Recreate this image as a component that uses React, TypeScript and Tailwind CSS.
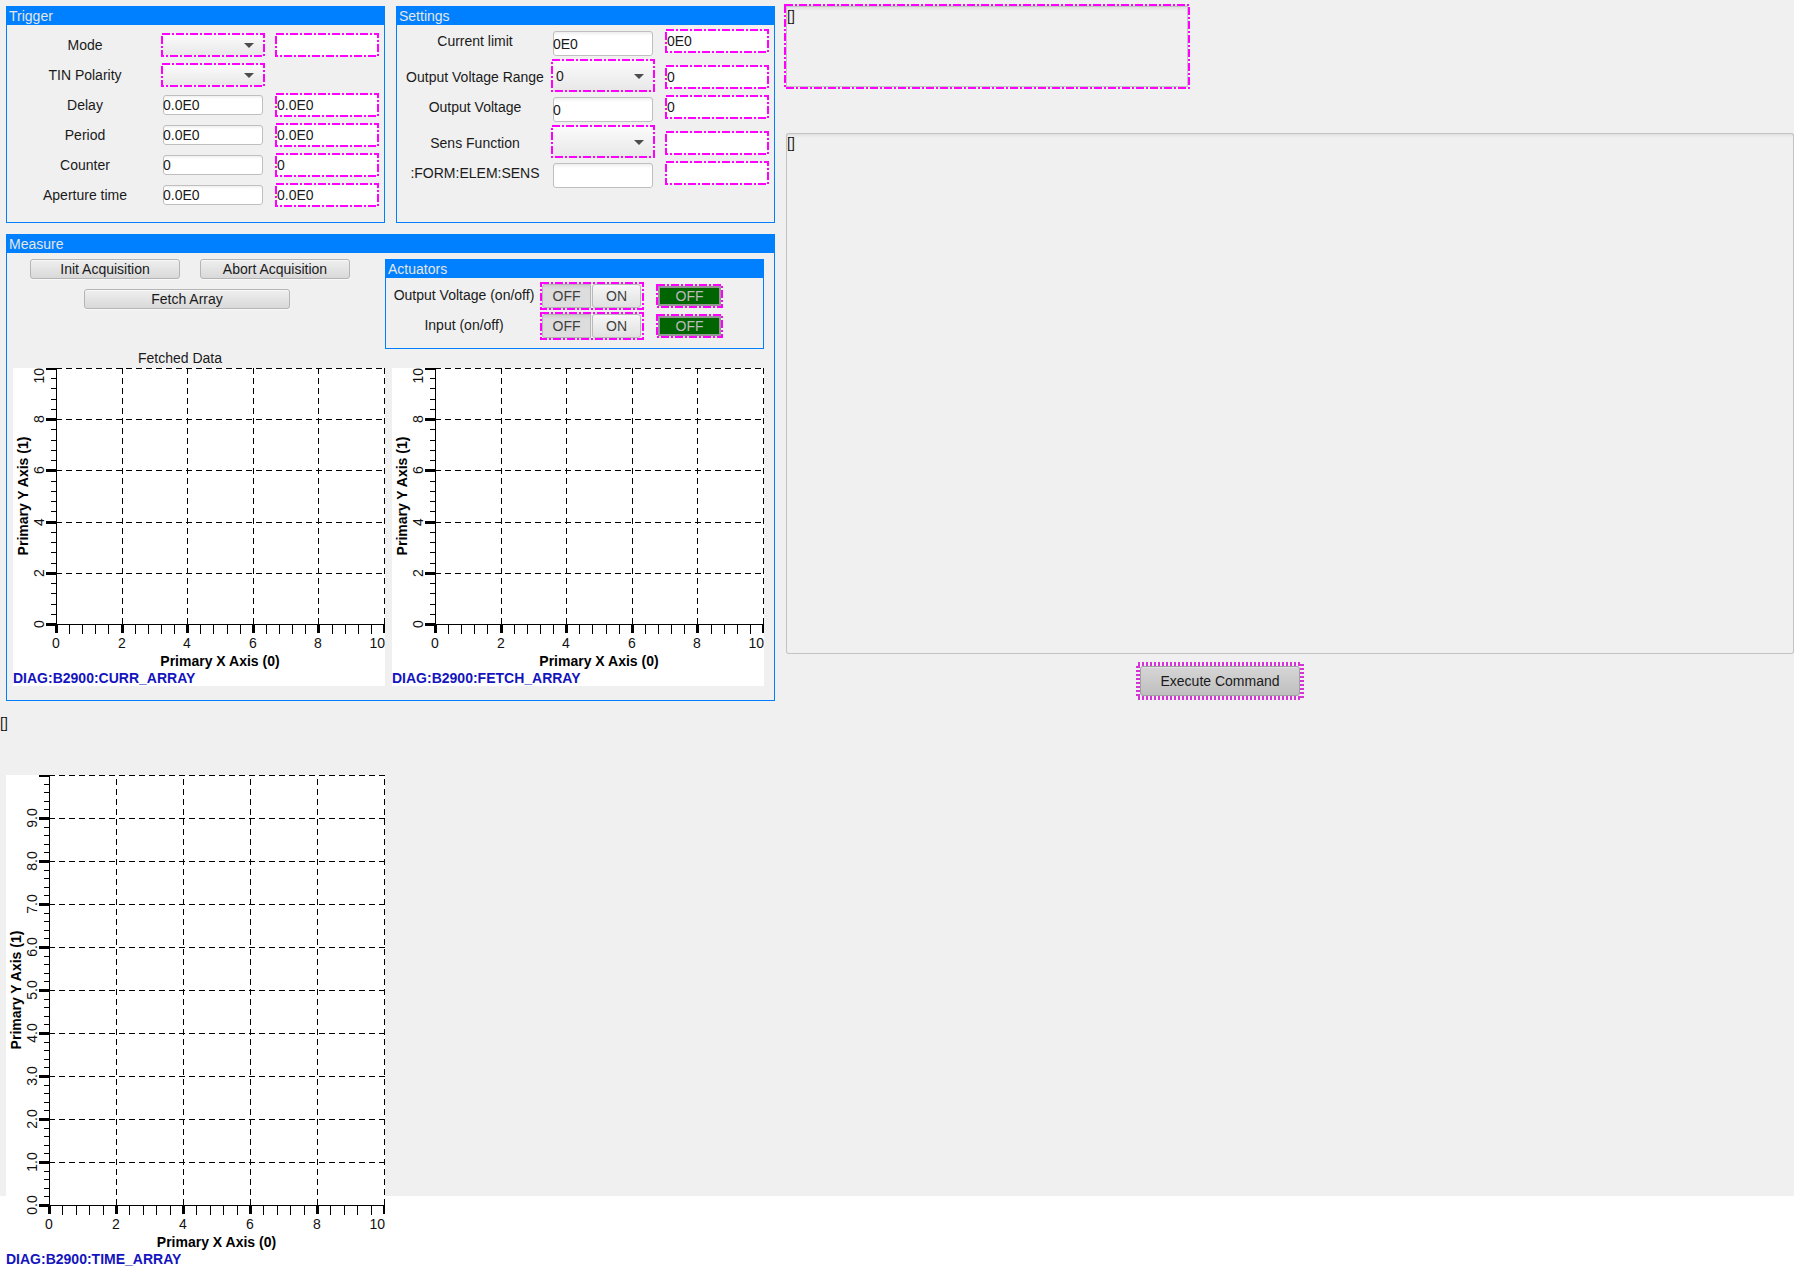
import React, { useId } from "react";

const ALARM = "#ff00ff";

function AlarmBorder() {
  return (
    <svg
      aria-hidden="true"
      className="pointer-events-none absolute inset-px h-[calc(100%-2px)] w-[calc(100%-2px)] overflow-visible"
    >
      <rect
        width="100%"
        height="100%"
        fill="none"
        stroke={ALARM}
        strokeWidth="2"
        strokeDasharray="8 2 2 2"
        shapeRendering="crispEdges"
      />
    </svg>
  );
}

function Panel({
  title,
  className = "",
  children,
}: {
  title: string;
  className?: string;
  children: React.ReactNode;
}) {
  return (
    <section className={`border border-[#0080ff] ${className}`}>
      <h2 className="h-[18px] bg-[#0080ff] px-0.5 text-[#e6e6e6]">{title}</h2>
      {children}
    </section>
  );
}

function TextEntry({ id, value, tall }: { id: string; value: string; tall?: boolean }) {
  return (
    <input
      id={id}
      defaultValue={value}
      className={`block w-[100px] rounded-[3px] bg-white bg-linear-to-b from-[#eaeaea] to-white to-20% p-0 shadow-[inset_0_0_0_1px_#bfbfbf] outline-none ${
        tall ? "h-[25px]" : "h-5"
      }`}
    />
  );
}

function Combo({ id, options, tall }: { id: string; options: string[]; tall?: boolean }) {
  return (
    <div className={`relative w-[104px] p-0.5 ${tall ? "h-[33px]" : "h-6"}`}>
      <select
        id={id}
        className="block h-full w-full appearance-none bg-linear-to-b from-[#fbfbfb] to-[#e8e8e8] px-[3px] outline-none"
      >
        {options.map((o) => (
          <option key={o}>{o}</option>
        ))}
      </select>
      <svg
        aria-hidden="true"
        viewBox="0 0 10 5"
        className="pointer-events-none absolute top-1/2 right-[11px] -mt-0.5 h-[5px] w-2.5"
      >
        <path d="M0 0h10L5 5z" fill="#4d4d4d" />
      </svg>
      <AlarmBorder />
    </div>
  );
}

function Readback({ label, value }: { label: string; value: string }) {
  return (
    <output
      aria-label={`${label} readback`}
      className="relative block h-6 w-[104px] bg-white bg-clip-content p-0.5 leading-5"
    >
      {value}
      <AlarmBorder />
    </output>
  );
}

type Field = { label: string; value: string; kind: "text" | "combo"; readback: boolean };

const triggerFields: Field[] = [
  { label: "Mode", value: "", kind: "combo", readback: true },
  { label: "TIN Polarity", value: "", kind: "combo", readback: false },
  { label: "Delay", value: "0.0E0", kind: "text", readback: true },
  { label: "Period", value: "0.0E0", kind: "text", readback: true },
  { label: "Counter", value: "0", kind: "text", readback: true },
  { label: "Aperture time", value: "0.0E0", kind: "text", readback: true },
];

const settingsFields: Field[] = [
  { label: "Current limit", value: "0E0", kind: "text", readback: true },
  { label: "Output Voltage Range", value: "0", kind: "combo", readback: true },
  { label: "Output Voltage", value: "0", kind: "text", readback: true },
  { label: "Sens Function", value: "", kind: "combo", readback: true },
  { label: ":FORM:ELEM:SENS", value: "", kind: "text", readback: true },
];

function TriggerRow({ label, value, kind, readback }: Field) {
  const id = useId();
  return (
    <div className="flex h-6 items-center">
      <label htmlFor={id} className="w-[150px] pr-0.5 text-center">
        {label}
      </label>
      <div className="flex w-[104px] justify-center">
        {kind === "combo" ? <Combo id={id} options={[value]} /> : <TextEntry id={id} value={value} />}
      </div>
      <div className="ml-2.5">{readback && <Readback label={label} value={value} />}</div>
    </div>
  );
}

function SettingsRow({ label, value, kind }: Field) {
  const id = useId();
  const combo = kind === "combo";
  return (
    <div className={`flex items-start ${combo ? "h-9" : "h-[30px]"}`}>
      <label htmlFor={id} className={`w-[150px] pr-0.5 text-center leading-6 ${combo ? "mt-1.5" : ""}`}>
        {label}
      </label>
      <div className={`flex w-[104px] justify-center ${combo ? "" : "pt-0.5"}`}>
        {combo ? <Combo id={id} options={[value]} tall /> : <TextEntry id={id} value={value} tall />}
      </div>
      <div className={`ml-2.5 ${combo ? "mt-1.5" : ""}`}>
        <Readback label={label} value={value} />
      </div>
    </div>
  );
}

function ActionButton({ children, className }: { children: React.ReactNode; className: string }) {
  return (
    <button
      type="button"
      className={`h-5 shrink-0 rounded-[3px] border border-[#b5b5b5] bg-linear-to-b from-[#efefef] to-[#d9d9d9] leading-[18px] shadow-[inset_0_1px_0_#f8f8f8,0_1px_0_#f8f8f8] ${className}`}
    >
      {children}
    </button>
  );
}

function ActuatorRow({ label }: { label: string }) {
  return (
    <div className="flex h-[30px] items-start">
      <div className="w-[154px] pt-px pl-0.5 text-center leading-6">{label}</div>
      <div role="group" aria-label={label} className="relative flex h-7 w-[104px] p-0.5 text-[#404040]">
        <button
          type="button"
          aria-pressed="true"
          className="w-[49px] rounded-l-[3px] border border-[#b5b5b5] bg-linear-to-b from-[#cfcfcf] via-[#dddddd] via-20% to-[#dddddd]"
        >
          OFF
        </button>
        <button
          type="button"
          aria-pressed="false"
          className="ml-px w-[49px] rounded-[3px] border border-[#b9b9b9] bg-linear-to-b from-[#f7f7f7] to-[#e0e0e0]"
        >
          ON
        </button>
        <AlarmBorder />
      </div>
      <div className="relative mt-0.5 ml-3 h-6 w-[67px] p-0.5">
        <output
          aria-label={`${label} state`}
          className="block h-5 border-2 border-[#969696] bg-[#006400] text-center leading-4 text-[#bcbcbc]"
        >
          OFF
        </output>
        <AlarmBorder />
      </div>
    </div>
  );
}

type ChartProps = {
  width: number;
  axisX: number;
  plotHeight: number;
  yLabels: string[];
  trace: string;
};

function Chart({ width, axisX, plotHeight, yLabels, trace }: ChartProps) {
  const right = width - 1;
  const plotWidth = right - axisX;
  const yMajors = yLabels.length - 1;
  const xAt = (f: number) => Math.round(axisX + f * plotWidth);
  const yAt = (f: number) => Math.round((1 - f) * plotHeight);
  const xTicks = Array.from({ length: 26 }, (_, i) => i);
  const yTicks = Array.from({ length: yMajors * 5 + 1 }, (_, i) => i);
  return (
    <figure className="bg-white">
      <svg
        width={width}
        height={plotHeight + 46}
        className="block overflow-hidden text-[14px]"
        role="img"
        aria-label={`${trace} plot`}
      >
        <g stroke="#000" strokeDasharray="6 4" shapeRendering="crispEdges">
          {xTicks
            .filter((i) => i % 5 === 0 && i > 0)
            .map((i) => (
              <line key={i} x1={xAt(i / 25) + 0.5} x2={xAt(i / 25) + 0.5} y1={plotHeight} y2={0} />
            ))}
          {yTicks
            .filter((i) => i % 5 === 0 && i > 0)
            .map((i) => {
              const y = yAt(i / (yMajors * 5)) + 0.5;
              return <line key={i} x1={axisX} x2={width} y1={y} y2={y} />;
            })}
        </g>
        <g fill="#000" shapeRendering="crispEdges">
          <rect x={axisX} y="0" width="1" height={plotHeight + 1} />
          <rect x={axisX} y={plotHeight} width={plotWidth + 1} height="1" />
          {xTicks.map((i) =>
            i % 5 === 0 ? (
              <rect key={i} x={xAt(i / 25) - 1} y={plotHeight} width="3" height="9" />
            ) : (
              <rect key={i} x={xAt(i / 25)} y={plotHeight} width="1" height="10" />
            ),
          )}
          {yTicks.map((i) => {
            const y = yAt(i / (yMajors * 5));
            return i % 5 === 0 ? (
              <rect key={i} x={axisX - 10} y={y - 1} width="10" height="3" />
            ) : (
              <rect key={i} x={axisX - 5} y={y} width="5" height="1" />
            );
          })}
        </g>
        <g fill="#111">
          {[0, 2, 4, 6, 8, 10].map((v) => (
            <text
              key={v}
              x={v === 10 ? width : xAt(v / 10)}
              y={plotHeight + 24}
              textAnchor={v === 10 ? "end" : "middle"}
            >
              {v}
            </text>
          ))}
          {yLabels.map((l, i) => {
            const top = i === yMajors;
            return (
              <text
                key={i}
                transform={`translate(${axisX - 12} ${top ? 0 : yAt(i / yMajors)}) rotate(-90)`}
                textAnchor={top ? "end" : "middle"}
              >
                {l}
              </text>
            );
          })}
        </g>
        <g fill="#000" fontWeight="bold" textAnchor="middle">
          <text x={axisX + plotWidth / 2} y={plotHeight + 42}>
            Primary X Axis (0)
          </text>
          <text transform={`translate(${axisX - 28} ${plotHeight / 2}) rotate(-90)`}>Primary Y Axis (1)</text>
        </g>
      </svg>
      <figcaption className="h-4 leading-4 font-bold text-[#1414be]">{trace}</figcaption>
    </figure>
  );
}

const evenLabels = ["0", "2", "4", "6", "8", "10"];
const decimalLabels = ["0.0", "1.0", "2.0", "3.0", "4.0", "5.0", "6.0", "7.0", "8.0", "9.0", ""];

export default function App() {
  return (
    <div className="bg-[linear-gradient(#f0f0f0,#f0f0f0)] bg-[length:100%_1196px] bg-no-repeat font-['Liberation_Sans',Arial,sans-serif] text-[14px] leading-[18px] text-[#1a1a1a]">
      <main className="flex items-start">
        <div className="w-[785px] shrink-0 pt-1.5">
          <div className="ml-1.5 w-[769px]">
            <div className="flex justify-between">
              <Panel title="Trigger" className="h-[217px] w-[379px]">
                <div className="mt-2 ml-1 flex flex-col gap-1.5">
                  {triggerFields.map((f) => (
                    <TriggerRow key={f.label} {...f} />
                  ))}
                </div>
              </Panel>
              <Panel title="Settings" className="h-[217px] w-[379px]">
                <div className="mt-1 ml-1">
                  {settingsFields.map((f) => (
                    <SettingsRow key={f.label} {...f} />
                  ))}
                </div>
              </Panel>
            </div>

            <Panel title="Measure" className="mt-[11px] pb-3.5">
              <div className="mr-2.5 ml-1.5 flex justify-between pt-1.5">
                <div className="w-[334px]">
                  <div className="ml-[17px] flex gap-5">
                    <ActionButton className="w-[150px]">Init Acquisition</ActionButton>
                    <ActionButton className="w-[150px]">Abort Acquisition</ActionButton>
                  </div>
                  <ActionButton className="mt-2.5 ml-[71px] block w-[206px]">Fetch Array</ActionButton>
                  <div className="mt-10 h-[19px] text-center">Fetched Data</div>
                </div>
                <Panel title="Actuators" className="h-[90px] w-[379px]">
                  <div className="mt-1">
                    <ActuatorRow label="Output Voltage (on/off)" />
                    <ActuatorRow label="Input (on/off)" />
                  </div>
                </Panel>
              </div>
              <div className="mr-2.5 ml-1.5 flex justify-between">
                <Chart width={372} axisX={43} plotHeight={256} yLabels={evenLabels} trace="DIAG:B2900:CURR_ARRAY" />
                <Chart width={372} axisX={43} plotHeight={256} yLabels={evenLabels} trace="DIAG:B2900:FETCH_ARRAY" />
              </div>
            </Panel>
          </div>

          <output aria-label="Array values" className="mt-[13px] block h-[61px]">
            []
          </output>

          <div className="ml-1.5 w-[379px]">
            <Chart width={379} axisX={43} plotHeight={430} yLabels={decimalLabels} trace="DIAG:B2900:TIME_ARRAY" />
          </div>
        </div>

        <div className="min-w-0 flex-1 pt-1">
          <div className="relative -ml-px h-[85px] w-[406px] p-0.5">
            <textarea
              aria-label="Command"
              defaultValue="[]"
              className="block h-full w-full resize-none bg-linear-to-b from-[#dedede] to-[#f0f0f0] to-[5px] px-px pt-px shadow-[inset_0_0_0_1px_#c3c3c3] outline-none"
            />
            <AlarmBorder />
          </div>
          <textarea
            aria-label="Response"
            defaultValue="[]"
            className="mt-11 ml-px block h-[521px] w-[calc(100%-1px)] resize-none rounded-[3px] bg-linear-to-b from-[#dedede] to-[#f0f0f0] to-[5px] px-px pt-px shadow-[inset_0_0_0_1px_#c3c3c3] outline-none"
          />
          <div className="relative mt-2 ml-[351px] h-[38px] w-[168px] p-1">
            <button
              type="button"
              className="h-[30px] w-full rounded-[3px] border border-[#a0a0a0] bg-linear-to-b from-[#d6d6d6] to-[#bfbfbf] shadow-[inset_0_1px_0_#e2e2e2]"
            >
              Execute Command
            </button>
            <svg
              aria-hidden="true"
              className="pointer-events-none absolute inset-0.5 h-[calc(100%-4px)] w-[calc(100%-4px)] overflow-visible"
            >
              <rect
                width="100%"
                height="100%"
                fill="none"
                stroke="#d633d6"
                strokeWidth="4"
                strokeDasharray="2 2"
                shapeRendering="crispEdges"
              />
            </svg>
          </div>
        </div>
      </main>
    </div>
  );
}
